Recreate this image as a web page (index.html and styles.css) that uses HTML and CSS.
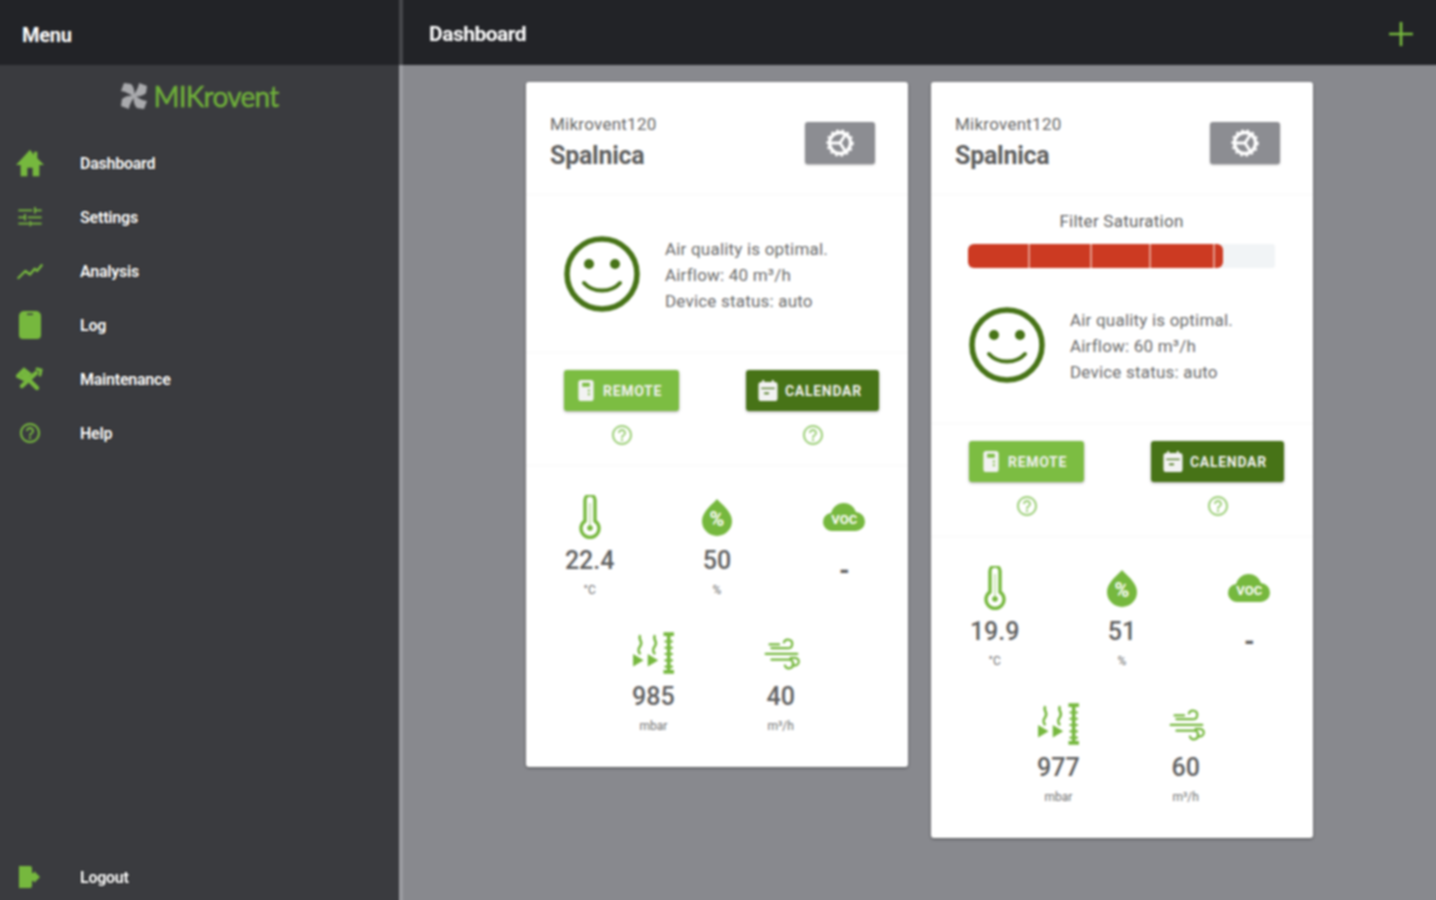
FILE: index.html
```html
<!DOCTYPE html>
<html lang="en">
<head>
<meta charset="utf-8">
<title>Mikrovent Dashboard</title>
<link rel="stylesheet" href="styles.css">
</head>
<body>
<svg class="defs" width="0" height="0" aria-hidden="true">
  <symbol id="i-help" viewBox="0 0 24 24"><path fill="currentColor" d="M11 18h2v-2h-2v2zm1-16C6.48 2 2 6.48 2 12s4.48 10 10 10 10-4.48 10-10S17.52 2 12 2zm0 18c-4.41 0-8-3.59-8-8s3.59-8 8-8 8 3.59 8 8-3.59 8-8 8zm0-14c-2.21 0-4 1.79-4 4h2c0-1.1.9-2 2-2s2 .9 2 2c0 2-3 1.75-3 5h2c0-2.25 3-2.5 3-5 0-2.21-1.79-4-4-4z"/></symbol>
  <symbol id="i-gear" viewBox="0 0 30 30"><g fill="none" stroke="currentColor"><circle cx="15" cy="15" r="10.500" stroke-width="3.400"/><circle cx="15" cy="15" r="12.800" stroke-width="1.800" stroke-dasharray="2.500 3.100"/><path stroke-width="3" d="M15 15H5M15 15l5.500-8.500M15 15l5.500 8.500"/></g></symbol>
  <symbol id="i-smile" viewBox="0 0 76 76"><g fill="none" stroke="currentColor"><circle cx="38" cy="38" r="35" stroke-width="5.500"/><path stroke-width="4" stroke-linecap="round" d="M20 47c9 10 27 10 36 0"/></g><circle cx="25" cy="28" r="5" fill="currentColor"/><circle cx="51" cy="28" r="5" fill="currentColor"/></symbol>
  <symbol id="i-remote" viewBox="0 0 16 22"><path fill="currentColor" fill-rule="evenodd" d="M3 0h10a3 3 0 0 1 3 3v16a3 3 0 0 1-3 3H3a3 3 0 0 1-3-3V3a3 3 0 0 1 3-3zm1 3v4h8V3H4zm8 7v2h-2v-2h2zm0 4v2h-2v-2h2z"/></symbol>
  <symbol id="i-calendar" viewBox="0 0 20 22"><path fill="currentColor" fill-rule="evenodd" d="M4 0h2v2h8V0h2v2h1a3 3 0 0 1 3 3v14a3 3 0 0 1-3 3H3a3 3 0 0 1-3-3V5a3 3 0 0 1 3-3h1V0zM3 8v1.500h14V8H3zm3 5v2h5v-2H6z"/></symbol>
  <symbol id="i-thermo" viewBox="0 0 24 44"><path fill="none" stroke="currentColor" stroke-width="3.400" d="M7 5a5 5 0 0 1 10 0v21a9 9 0 1 1-10 0z"/><path fill="none" stroke="currentColor" stroke-width="1.200" opacity=".6" d="M12 8v24"/><circle cx="12" cy="33" r="2.800" fill="currentColor"/></symbol>
  <symbol id="i-drop" viewBox="-6 -3 44 44"><path fill="currentColor" d="M16 1c3 4 15 12 15 22a15 15 0 0 1-30 0C1 13 13 5 16 1z"/></symbol>
  <symbol id="i-voc" viewBox="-1 -7 44 44"><path fill="currentColor" d="M10 29a9 9 0 0 1-2-18 13 13 0 0 1 25-1 9.500 9.500 0 0 1-1 19z"/></symbol>
  <symbol id="i-press" viewBox="0 0 42 40"><g fill="none" stroke="currentColor" stroke-width="2.400"><path d="M9 3c-3 4 3 6 0 10s-2 6 0 8M23 3c-3 4 3 6 0 10s-2 6 0 8"/><path stroke-width="3.400" d="M31 2h10M36 2v36M31 38h10"/><path stroke-width="2" d="M32 9h8M32 15h8M32 21h8M32 27h8M32 33h8"/></g><path fill="currentColor" d="M2 21l10 6-10 6zM16 21l10 6-10 6z"/></symbol>
  <symbol id="i-wind" viewBox="-5 -9 46 46"><path fill="none" stroke="currentColor" stroke-width="2.300" stroke-linecap="round" d="M8 9h17a4.500 4.500 0 1 0-4-6M6 5h10M2 15h33M8 21h18a4.500 4.500 0 1 1-4 6M28 19h5a4 4 0 1 1-3 7"/></symbol>
</svg>

<div class="app">
  <aside class="sidebar">
    <header class="side-head"><h2 class="bar-title side-title">Menu</h2></header>
    <div class="logo">
      <svg class="logo-fan" viewBox="0 0 28 28"><path fill="currentColor" d="M14 15C10 12 4 9 1 9l3-8 7 1c3 3 4 8 3 13zM13 14c3-4 6-10 6-13l8 3-1 7c-3 3-8 4-13 3zM14 13c4 3 10 6 13 6l-3 8-7-1c-3-3-4-8-3-13zM15 14c-3 4-6 10-6 13l-8-3 1-7c3-3 8-4 13-3z"/></svg>
      <span class="logo-text">MIKrovent</span>
    </div>
    <nav class="nav">
      <a class="nav-item"><svg class="nav-icon" viewBox="1.500 1 21 21"><path fill="currentColor" d="M10 21.500v-6.500h4v6.500h5V13h3.500L17.500 8V3H15v2.500L12 1.500 1.500 13H5v8.500z"/></svg><span>Dashboard</span></a>
      <a class="nav-item"><svg class="nav-icon" viewBox="0 0 24 24"><path fill="currentColor" d="M2 17v1.500h9V17H2zM2 5.500V7h12V5.500H2zM13 20v-1.500h9V17h-9v-1.500h-1.500V20H13zM7 9.500v2H2V13h5v2h1.500V9.500H7zM22 13v-1.500H10V13h12zM15.500 9H17V7h5V5.500h-5V3.500h-1.500V9z"/></svg><span>Settings</span></a>
      <a class="nav-item"><svg class="nav-icon" viewBox="0 0 24 24"><path fill="none" stroke="currentColor" stroke-width="2" stroke-linecap="round" stroke-linejoin="round" d="M2 18l6-6 4 3 4-5 2 2 4-5"/></svg><span>Analysis</span></a>
      <a class="nav-item"><svg class="nav-icon" viewBox="0 0 24 28"><path fill="currentColor" fill-rule="evenodd" d="M6 0h12a5 5 0 0 1 5 5v19a4 4 0 0 1-4 4H5a4 4 0 0 1-4-4V5a5 5 0 0 1 5-5zm3 2.500V4h6V2.500H9z"/></svg><span>Log</span></a>
      <a class="nav-item"><svg class="nav-icon" viewBox="0 0 28 24"><g fill="none" stroke="currentColor" stroke-linecap="round"><path stroke-width="4.400" d="M6 19L20 6M8 8l13 13"/><path stroke-width="4" d="M2 9l6-6 5 4-5 5z"/><path stroke-width="3" d="M21 2l4 1-1 5"/></g></svg><span>Maintenance</span></a>
      <a class="nav-item"><svg class="nav-icon nav-help"><use href="#i-help"/></svg><span>Help</span></a>
    </nav>
    <a class="nav-item nav-logout"><svg class="nav-icon" viewBox="-1 -2 28 28"><path fill="currentColor" d="M2 1h11a2 2 0 0 1 2 2v5h2V6l6 6-6 6v-2h-2v5a2 2 0 0 1-2 2H2z"/></svg><span>Logout</span></a>
  </aside>

  <div class="main">
    <header class="main-head">
      <h1 class="bar-title">Dashboard</h1>
      <svg class="add" viewBox="0 0 24 24"><path fill="currentColor" d="M10.750 1h2.500v9.750H23v2.500h-9.750V23h-2.500v-9.750H1v-2.500h9.750z"/></svg>
    </header>
    <main class="content">

      <article class="card">
        <section class="card-head">
          <div>
            <div class="model">Mikrovent120</div>
            <div class="room">Spalnica</div>
          </div>
          <button class="gear-btn"><svg class="gear"><use href="#i-gear"/></svg></button>
        </section>
        <section class="status">
          <svg class="smile"><use href="#i-smile"/></svg>
          <div class="status-text">
            <div>Air quality is optimal.</div>
            <div>Airflow: 40 m³/h</div>
            <div>Device status: auto</div>
          </div>
        </section>
        <section class="actions">
          <div class="action">
            <button class="btn btn-remote"><svg class="btn-ic"><use href="#i-remote"/></svg>REMOTE</button>
            <svg class="q"><use href="#i-help"/></svg>
          </div>
          <div class="action">
            <button class="btn btn-cal"><svg class="btn-ic-cal"><use href="#i-calendar"/></svg>CALENDAR</button>
            <svg class="q"><use href="#i-help"/></svg>
          </div>
        </section>
        <section class="readings">
          <div class="reading"><div class="r-wrap"><svg class="r-ic"><use href="#i-thermo"/></svg></div><div class="val">22.4</div><div class="unit">°C</div></div>
          <div class="reading"><div class="r-wrap"><svg class="r-ic"><use href="#i-drop"/></svg><span class="r-tag r-pct">%</span></div><div class="val">50</div><div class="unit">%</div></div>
          <div class="reading"><div class="r-wrap"><svg class="r-ic"><use href="#i-voc"/></svg><span class="r-tag r-voc">VOC</span></div><div class="val val-none">-</div></div>
          <div class="reading"><div class="r-wrap"><svg class="r-ic"><use href="#i-press"/></svg></div><div class="val">985</div><div class="unit">mbar</div></div>
          <div class="reading"><div class="r-wrap"><svg class="r-ic"><use href="#i-wind"/></svg></div><div class="val">40</div><div class="unit">m³/h</div></div>
        </section>
      </article>

      <article class="card">
        <section class="card-head">
          <div>
            <div class="model">Mikrovent120</div>
            <div class="room">Spalnica</div>
          </div>
          <button class="gear-btn"><svg class="gear"><use href="#i-gear"/></svg></button>
        </section>
        <section class="filter">
          <div class="filter-title">Filter Saturation</div>
          <div class="track">
            <div class="fill"><i></i><i></i><i class="short"></i><i class="long"></i></div>
          </div>
        </section>
        <section class="status">
          <svg class="smile"><use href="#i-smile"/></svg>
          <div class="status-text">
            <div>Air quality is optimal.</div>
            <div>Airflow: 60 m³/h</div>
            <div>Device status: auto</div>
          </div>
        </section>
        <section class="actions">
          <div class="action">
            <button class="btn btn-remote"><svg class="btn-ic"><use href="#i-remote"/></svg>REMOTE</button>
            <svg class="q"><use href="#i-help"/></svg>
          </div>
          <div class="action">
            <button class="btn btn-cal"><svg class="btn-ic-cal"><use href="#i-calendar"/></svg>CALENDAR</button>
            <svg class="q"><use href="#i-help"/></svg>
          </div>
        </section>
        <section class="readings">
          <div class="reading"><div class="r-wrap"><svg class="r-ic"><use href="#i-thermo"/></svg></div><div class="val">19.9</div><div class="unit">°C</div></div>
          <div class="reading"><div class="r-wrap"><svg class="r-ic"><use href="#i-drop"/></svg><span class="r-tag r-pct">%</span></div><div class="val">51</div><div class="unit">%</div></div>
          <div class="reading"><div class="r-wrap"><svg class="r-ic"><use href="#i-voc"/></svg><span class="r-tag r-voc">VOC</span></div><div class="val val-none">-</div></div>
          <div class="reading"><div class="r-wrap"><svg class="r-ic"><use href="#i-press"/></svg></div><div class="val">977</div><div class="unit">mbar</div></div>
          <div class="reading"><div class="r-wrap"><svg class="r-ic"><use href="#i-wind"/></svg></div><div class="val">60</div><div class="unit">m³/h</div></div>
        </section>
      </article>

    </main>
  </div>
</div>
</body>
</html>
```

FILE: styles.css
```css
* { box-sizing: border-box; }
html, body { margin: 0; height: 100%; overflow: hidden; background: #88898e; }
body { font-family: Roboto, "Liberation Sans", sans-serif; }
.defs { position: absolute; }
/* The app bleeds 3px past the window so the soft blur has no light fringe at the edges. */
.app { display: flex; width: 1442px; height: 906px; margin: -3px; filter: blur(0.8px); }

.sidebar { width: 402px; flex: none; background: #3a3b3f; display: flex; flex-direction: column; }
.side-head { height: 68px; flex: none; background: #222327; display: flex; align-items: center; padding: 7px 0 0 25px; }
.bar-title { margin: 0; font-size: 21px; font-weight: 700; color: #fff; letter-spacing: -0.5px; }
.side-title { font-size: 20px; letter-spacing: -0.25px; }

.logo { height: 71px; flex: none; display: flex; align-items: center; justify-content: center; gap: 5px; padding: 0 0 10px 3px; }
.logo-fan { width: 28px; height: 28px; color: #a9aaad; }
.logo-text { font-family: Lato, sans-serif; font-size: 28px; font-weight: 400; color: #6fb03a; letter-spacing: -0.75px; -webkit-text-stroke: 0.4px #6fb03a; }

.nav { display: flex; flex-direction: column; flex: 1; }
.nav-item { height: 54px; display: flex; align-items: center; padding-left: 19px; gap: 36px; color: #fff; font-size: 16px; font-weight: 700; letter-spacing: -0.25px; text-shadow: 0 0 2px #000; }
.nav-icon { width: 28px; height: 28px; flex: none; color: #76b83e; }
.nav-help { padding: 2px; }
.nav-logout { height: 49px; flex: none; padding-bottom: 3px; }

.main { flex: 1; display: flex; flex-direction: column; min-width: 0; }
.main-head { height: 68px; flex: none; background: #222327; border-left: 4px solid #46474b; display: flex; align-items: center; justify-content: space-between; padding: 6px 25px 0 26px; }
.add { width: 26px; height: 26px; color: #76b83e; }
.content { flex: 1; border-left: 4px solid #9b9ca1; background: #88898e; display: flex; justify-content: center; align-items: flex-start; gap: 23px; padding: 17px 3px 0 0; }

.card { width: 382px; background: #fff; border-radius: 3px; box-shadow: 0 1px 3px rgba(0, 0, 0, .45); color: #666; }
.card-head { height: 113px; display: flex; justify-content: space-between; align-items: flex-start; padding: 31px 33px 0 24px; border-bottom: 1px solid #f8f8f8; }
.model { font-size: 17px; line-height: 22px; color: #666; letter-spacing: 0.25px; }
.room { font-size: 25px; line-height: 36px; font-weight: 700; color: #5e5e5e; margin-top: 3px; letter-spacing: -0.25px; }
.gear-btn { width: 70px; height: 42px; margin-top: 9px; border: 0; border-radius: 3px; background: #8c8d92; box-shadow: 0 1px 2px rgba(0, 0, 0, .3); display: flex; align-items: center; justify-content: center; padding: 0; }
.gear { width: 30px; height: 30px; color: #fff; }

.filter { height: 71px; padding: 14px 38px 0 37px; display: flex; flex-direction: column; }
.filter-title { text-align: center; font-size: 17px; line-height: 24px; color: #626262; letter-spacing: 0.25px; }
.track { height: 24px; flex: none; margin-top: 11px; background: #f1f4f6; border-radius: 3px; display: flex; }
.fill { width: 255px; background: #cc3a22; border-radius: 6px; display: flex; overflow: hidden; }
.fill i { width: 62px; flex: none; border-right: 2px solid #e39a8b; }
.fill i.short { width: 59px; }
.fill i.long { width: 64px; }

.status { height: 158px; display: flex; align-items: center; padding-left: 38px; gap: 25px; border-bottom: 1px solid #f8f8f8; }
.smile { width: 76px; height: 76px; flex: none; color: #477317; }
.status-text { font-size: 17px; line-height: 26px; color: #6a6a6a; margin-top: 3px; letter-spacing: 0.2px; }

.actions { height: 113px; display: flex; justify-content: space-between; padding: 17px 29px 0 38px; border-bottom: 1px solid #f8f8f8; }
.action { display: flex; flex-direction: column; align-items: center; gap: 12px; }
.btn { height: 41px; border: 0; border-radius: 3px; color: #f2f2f2; font-family: Roboto, sans-serif; font-size: 14px; font-weight: 700; letter-spacing: 0.7px; display: flex; align-items: center; box-shadow: 0 1px 3px rgba(0, 0, 0, .35); padding: 0; }
.btn-remote { width: 115px; background: #7cbd42; padding-left: 14px; gap: 9px; }
.btn-cal { width: 133px; background: #477317; padding-left: 12px; gap: 7px; }
.btn-ic { width: 16px; height: 21px; flex: none; }
.btn-ic-cal { width: 20px; height: 21px; flex: none; }
.q { width: 24px; height: 24px; color: #9ccf78; }

.readings { display: flex; flex-wrap: wrap; justify-content: center; padding: 29px 0 0; }
.reading { width: 33.333%; height: 136px; display: flex; flex-direction: column; align-items: center; }
.r-wrap { position: relative; width: 44px; height: 44px; flex: none; }
.r-ic { display: block; width: 44px; height: 44px; color: #76b83e; }
.r-tag { position: absolute; left: 0; right: 0; text-align: center; color: #fff; font-weight: 700; }
.r-pct { top: 14px; font-size: 20px; line-height: 20px; }
.r-voc { top: 18px; font-size: 13px; line-height: 14px; }
.val { font-size: 25px; line-height: 30px; margin-top: 7px; color: #606060; font-weight: 500; }
.val-none { margin-top: 17px; font-weight: 900; }
.unit { font-size: 12px; line-height: 18px; margin-top: 5px; color: #6f6f6f; }
```
